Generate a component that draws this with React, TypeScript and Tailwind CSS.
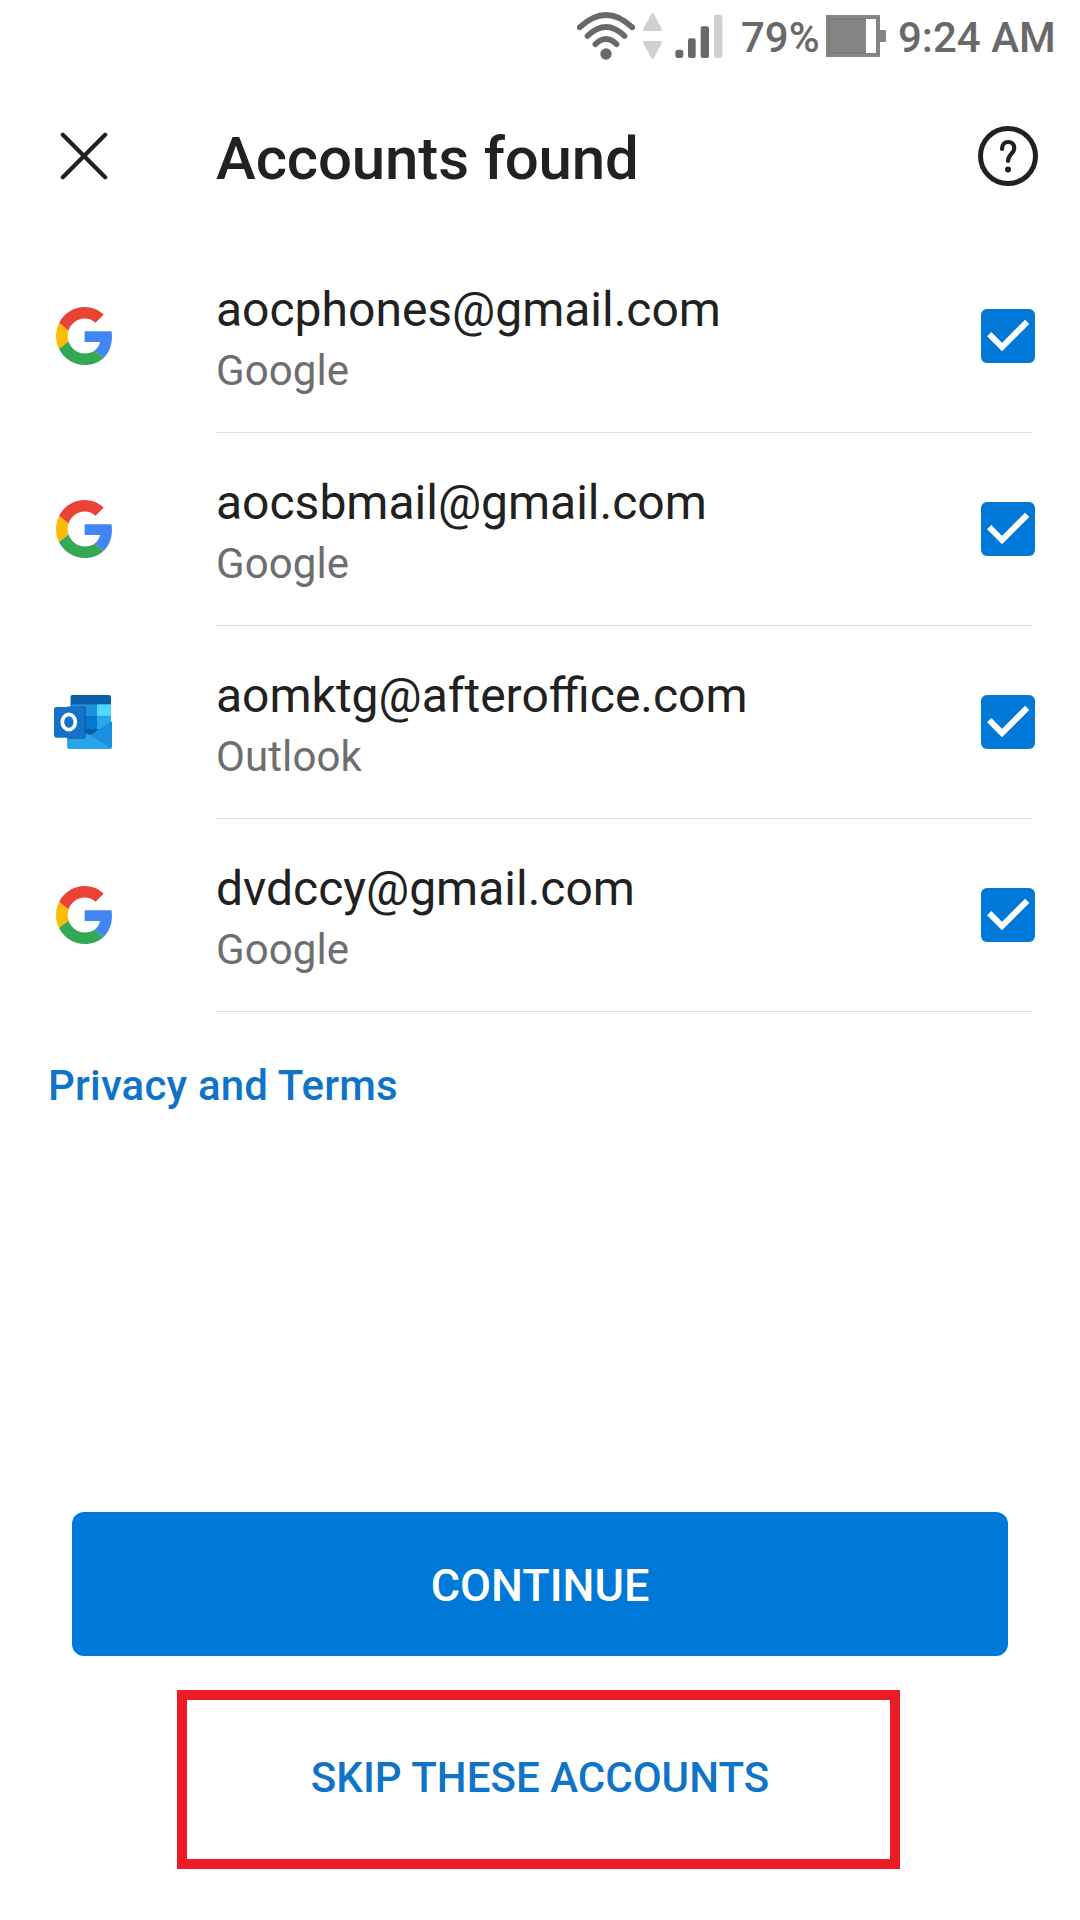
type Provider = "Google" | "Outlook";

interface Account {
  email: string;
  provider: Provider;
}

const accounts: Account[] = [
  { email: "aocphones@gmail.com", provider: "Google" },
  { email: "aocsbmail@gmail.com", provider: "Google" },
  { email: "aomktg@afteroffice.com", provider: "Outlook" },
  { email: "dvdccy@gmail.com", provider: "Google" },
];

const GoogleLogo = () => (
  <svg className="ml-[2px] h-[58px] w-[56px]" viewBox="0 0 47 48" preserveAspectRatio="none">
    <path fill="#ea4335" d="M24 9.5c3.54 0 6.71 1.22 9.21 3.6l6.85-6.85C35.9 2.38 30.47 0 24 0 14.62 0 6.51 5.38 2.56 13.22l7.98 6.19C12.43 13.72 17.74 9.5 24 9.5z" />
    <path fill="#4285f4" d="M46.98 24.55c0-1.57-.15-3.09-.38-4.55H24v9.02h12.94c-.58 2.96-2.26 5.48-4.78 7.18l7.73 6c4.51-4.18 7.09-10.36 7.09-17.65z" />
    <path fill="#fbbc05" d="M10.53 28.59c-.48-1.45-.76-2.99-.76-4.59s.27-3.14.76-4.59l-7.98-6.19C.92 16.46 0 20.12 0 24c0 3.88.92 7.54 2.56 10.78l7.97-6.19z" />
    <path fill="#34a853" d="M24 48c6.48 0 11.93-2.13 15.89-5.81l-7.73-6c-2.15 1.45-4.92 2.3-8.16 2.3-6.26 0-11.57-4.22-13.47-9.91l-7.98 6.19C6.51 42.62 14.62 48 24 48z" />
  </svg>
);

const OutlookLogo = () => (
  <svg className="h-[54px] w-[58px]" viewBox="0 0 174 162">
    <clipPath id="pages">
      <rect x="49" y="0" width="122" height="126" rx="7" />
    </clipPath>
    <g clipPath="url(#pages)">
      <rect x="49" width="122" height="126" fill="#0a5ea8" />
      <rect x="49" y="28" width="82" height="36" fill="#1b92e0" />
      <rect x="129" y="28" width="42" height="36" fill="#50d9ff" />
      <rect x="49" y="64" width="82" height="38" fill="#0078d4" />
      <rect x="129" y="64" width="42" height="38" fill="#28a8ea" />
      <rect x="49" y="102" width="82" height="24" fill="#0f59a0" />
      <rect x="129" y="102" width="42" height="24" fill="#0f6cbd" />
    </g>
    <path d="M174 79v76a7 7 0 0 1-7 7H47a7 7 0 0 1-7-7v-54l68 19z" fill="#1b8fde" />
    <path d="M40 92v63a7 7 0 0 0 7 7h120c2 0 4-1 5-2L108 120z" fill="#28a4e8" />
    <path d="M40 34h48a8 8 0 0 1 8 8v82a8 8 0 0 1-8 8H40z" fill="#0a4f94" opacity=".6" />
    <rect y="36" width="92" height="92" rx="7" fill="#1672c6" />
    <ellipse cx="44.500" cy="81" rx="19.500" ry="23" fill="none" stroke="#fff" strokeWidth="11" />
  </svg>
);

const logos = { Google: GoogleLogo, Outlook: OutlookLogo };

const CheckedBox = () => (
  <div role="checkbox" aria-checked="true" className="-mr-[3px] size-[54px] rounded-[6px] bg-[#0078d7]">
    <svg viewBox="0 0 54 54" fill="none" stroke="#fff" strokeWidth="6">
      <path d="M8.2 25.2 21 38 46.2 12.8" />
    </svg>
  </div>
);

const StatusBar = () => (
  <header className="flex h-[75px] items-center pl-[577px] text-[42px] font-medium leading-[75px] text-[#696969]">
    <svg className="mt-[-3px] h-[48px] w-[58px]" viewBox="0 0 174 144" fill="none" stroke="currentColor" strokeWidth="17" strokeLinecap="round">
      <path d="M8 46Q87-28 166 46M31.500 72Q87 18 142.500 72M55 97Q87 65 119 97" />
      <circle cx="87" cy="126" r="17" fill="currentColor" stroke="none" />
    </svg>
    <svg className="mt-[-3px] ml-[8px] h-[48px] w-[19px]" viewBox="0 0 57 144" fill="#d0d0d0" stroke="#d0d0d0" strokeWidth="8" strokeLinejoin="round">
      <path d="M28.500 7 53 53H4zM4 91h49L28.500 137z" />
    </svg>
    <svg className="mt-[-3px] ml-[13px] h-[48px] w-[48px]" viewBox="0 0 144 144" fill="currentColor">
      <rect x="1" y="113" width="24" height="25" rx="8" />
      <rect x="39" y="79" width="23" height="59" rx="6" />
      <rect x="77" y="43" width="25" height="95" rx="6" />
      <rect x="117" y="8" width="25" height="130" rx="6" fill="#d0d0d0" />
    </svg>
    <span className="ml-[18px] w-[85px]">79%</span>
    <svg className="mt-[-3px] h-[42px] w-[60px]" viewBox="0 0 180 126" fill="#858585">
      <path d="M0 0h162v45h18v36h-18v45H0z" />
      <path d="M120 12h30v102h-30z" fill="#fff" />
      <path d="M10 114V13h110M10 113h110" fill="none" stroke="#666" strokeWidth="1.500" />
    </svg>
    <span className="ml-[12px] whitespace-nowrap">9:24 AM</span>
  </header>
);

const TitleBar = () => (
  <div className="flex h-[165px] items-start pt-[46px]">
    <button className="ml-[60px] mt-[11px]" aria-label="Close">
      <svg className="size-[48px]" viewBox="0 0 48 48" stroke="currentColor" strokeWidth="4.200" strokeLinecap="round">
        <path d="M2.800 2.800 45.200 45.200M45.200 2.800 2.800 45.200" />
      </svg>
    </button>
    <h1 className="ml-[108px] w-[762px] text-[60px] font-medium leading-[76px] tracking-[-0.15px]">Accounts found</h1>
    <button className="mt-[5px]" aria-label="Help">
      <svg className="size-[60px]" viewBox="-30 -30 60 60" fill="none" stroke="currentColor" strokeLinecap="round">
        <circle r="27.500" strokeWidth="5" />
        <path d="M-6-7C-6-11.500-3.500-14 .2-14 4-14 6.300-11.300 6.300-8 6.300-2.500 0-1.500 0 5" strokeWidth="4.200" />
        <circle cy="13.500" r="3" fill="currentColor" stroke="none" />
      </svg>
    </button>
  </div>
);

const AccountRow = ({ email, provider }: Account) => {
  const Logo = logos[provider];
  return (
    <li className="flex h-[193px]">
      <div className="flex w-[216px] items-center pb-px pl-[54px]">
        <Logo />
      </div>
      <div className="flex w-[816px] items-center justify-between border-b border-[#dedede]">
        <div className="self-start pt-[40px]">
          <div className="text-[48px] leading-[60px]">{email}</div>
          <div className="text-[42px] leading-[62px] tracking-[0.1px] text-[#6e6e6e]">{provider}</div>
        </div>
        <CheckedBox />
      </div>
    </li>
  );
};

export default function App() {
  return (
    <main className="flex h-[1920px] w-[1080px] flex-col items-start bg-white font-['Roboto',sans-serif] text-[#212121]">
      <StatusBar />
      <TitleBar />
      <ul>
        {accounts.map((account) => (
          <AccountRow key={account.email} {...account} />
        ))}
      </ul>
      <a className="ml-[48px] mt-[44px] text-[42px] font-medium leading-[60px] tracking-[0.18px] text-[#0f74c8]">
        Privacy and Terms
      </a>
      <button className="ml-[72px] mt-[396px] h-[144px] w-[936px] rounded-xl bg-[#0078d7] pt-[3px] text-[45px] font-medium text-white">
        CONTINUE
      </button>
      <button className="ml-[177px] mt-[34px] h-[179px] w-[723px] border-[10px] border-[#ec1c24] pb-[4px] pl-[3px] text-[42px] font-medium tracking-[0.04px] text-[#0f74c8]">
        SKIP THESE ACCOUNTS
      </button>
    </main>
  );
}
